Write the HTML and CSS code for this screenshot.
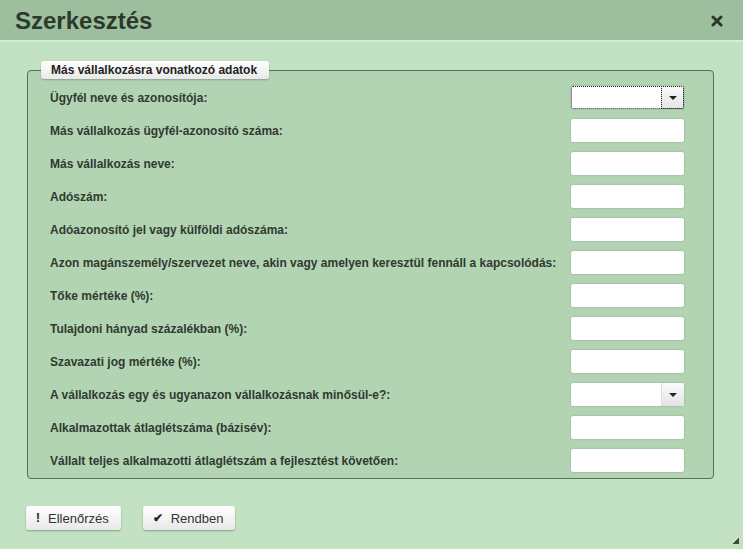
FILE: index.html
```html
<!DOCTYPE html>
<html lang="hu">
<head>
  <meta charset="UTF-8" />
  <title>Szerkesztés</title>
  <link rel="stylesheet" href="styles.css">
</head>
<body>
  <div class="dialog">
    <div class="titlebar">
      <div class="title">Szerkesztés</div>
      <div class="close">
        <svg width="12" height="12" viewBox="0 0 12 12"><path d="M2 2 L10 10 M10 2 L2 10" stroke="#2b3a2b" stroke-width="3" stroke-linecap="round"/></svg>
      </div>
    </div>

    <div class="content">
      <fieldset class="group">
        <legend>Más vállalkozásra vonatkozó adatok</legend>
        <div class="row"><label>Ügyfél neve és azonosítója:</label><div class="select focused"><span class="arrow"></span></div></div>
        <div class="row"><label>Más vállalkozás ügyfél-azonosító száma:</label><input type="text"></div>
        <div class="row"><label>Más vállalkozás neve:</label><input type="text"></div>
        <div class="row"><label>Adószám:</label><input type="text"></div>
        <div class="row"><label>Adóazonosító jel vagy külföldi adószáma:</label><input type="text"></div>
        <div class="row"><label>Azon magánszemély/szervezet neve, akin vagy amelyen keresztül fennáll a kapcsolódás:</label><input type="text"></div>
        <div class="row"><label>Tőke mértéke (%):</label><input type="text"></div>
        <div class="row"><label>Tulajdoni hányad százalékban (%):</label><input type="text"></div>
        <div class="row"><label>Szavazati jog mértéke (%):</label><input type="text"></div>
        <div class="row"><label>A vállalkozás egy és ugyanazon vállalkozásnak minősül-e?:</label><div class="select"><span class="arrow"></span></div></div>
        <div class="row"><label>Alkalmazottak átlaglétszáma (bázisév):</label><input type="text"></div>
        <div class="row"><label>Vállalt teljes alkalmazotti átlaglétszám a fejlesztést követően:</label><input type="text"></div>
      </fieldset>

      <div class="buttons">
        <button class="btn"><span class="ico">!</span>Ellenőrzés</button>
        <button class="btn"><span class="ico">✔</span>Rendben</button>
      </div>
      <div class="grip"></div>
    </div>
  </div>
</body>
</html>
```

FILE: styles.css
```css
body {
  margin: 0;
  font-family: "Liberation Sans", Arial, sans-serif;
  background: #c3e2c3;
}
.dialog {
  width: 743px;
  height: 549px;
  display: flex;
  flex-direction: column;
  background: #c3e2c3;
}
.titlebar {
  height: 40px;
  background: #9ebf9e;
  border-bottom: 2px solid #d6ecd6;
  display: flex;
  align-items: center;
  justify-content: space-between;
  padding: 0 20px 0 15px;
}
.title {
  font-size: 24px;
  font-weight: bold;
  color: #2b3a2b;
  margin-top: 2px;
}
.close {
  display: flex;
  margin-top: 1px;
}
.content {
  flex: 1;
  position: relative;
  padding: 19px 29px 0 27px;
}
.group {
  margin: 0;
  padding: 2px 29px 1px 22px;
  border: 1px solid #56705a;
  border-radius: 4px;
  background: #b3d4b3;
}
.group legend {
  margin-left: -9px;
  padding: 2px 12px 2px 10px;
  font-size: 12px;
  font-weight: bold;
  color: #222;
  background: linear-gradient(#ffffff, #e9e9e9);
  border-radius: 3px;
  box-shadow: 0 1px 2px rgba(0,0,0,0.25);
}
.row {
  height: 33px;
  display: flex;
  align-items: center;
  justify-content: space-between;
}
.row label {
  font-size: 12px;
  font-weight: bold;
  color: #2f3a30;
}
.row input, .select {
  box-sizing: border-box;
  width: 113px;
  height: 23px;
  border: none;
  border-radius: 2px;
  background: #fff;
  box-shadow: 0 0 2px rgba(0,0,0,0.25);
  margin: 0;
}
.select {
  position: relative;
  display: flex;
  justify-content: flex-end;
}
.select .arrow {
  width: 22px;
  height: 100%;
  background: linear-gradient(#fafafa, #e4e4e4);
  border-left: 1px solid #ddd;
  border-radius: 0 2px 2px 0;
  display: flex;
  align-items: center;
  justify-content: center;
}
.select .arrow::after {
  content: "";
  border-left: 4px solid transparent;
  border-right: 4px solid transparent;
  border-top: 4px solid #222;
}
.select.focused {
  outline: 1px dotted #222;
  outline-offset: -1px;
}
.select.focused .arrow {
  outline: 1px dotted #222;
  outline-offset: -1px;
}
.buttons {
  display: flex;
  gap: 22px;
  margin-top: 27px;
  margin-left: -1px;
}
.btn {
  height: 24px;
  padding: 0 12px 0 10px;
  font-family: "Liberation Sans", Arial, sans-serif;
  font-size: 13px;
  color: #333;
  background: linear-gradient(#ffffff, #e8e8e8);
  border: none;
  border-radius: 3px;
  box-shadow: 0 1px 2px rgba(0,0,0,0.3);
  display: flex;
  align-items: center;
}
.btn .ico {
  font-weight: bold;
  color: #222;
  margin-right: 8px;
  font-size: 12px;
}
.grip {
  position: absolute;
  right: 4px;
  bottom: 5px;
  width: 7px;
  height: 7px;
  background: linear-gradient(135deg, transparent 50%, #444 50%);
}
```
